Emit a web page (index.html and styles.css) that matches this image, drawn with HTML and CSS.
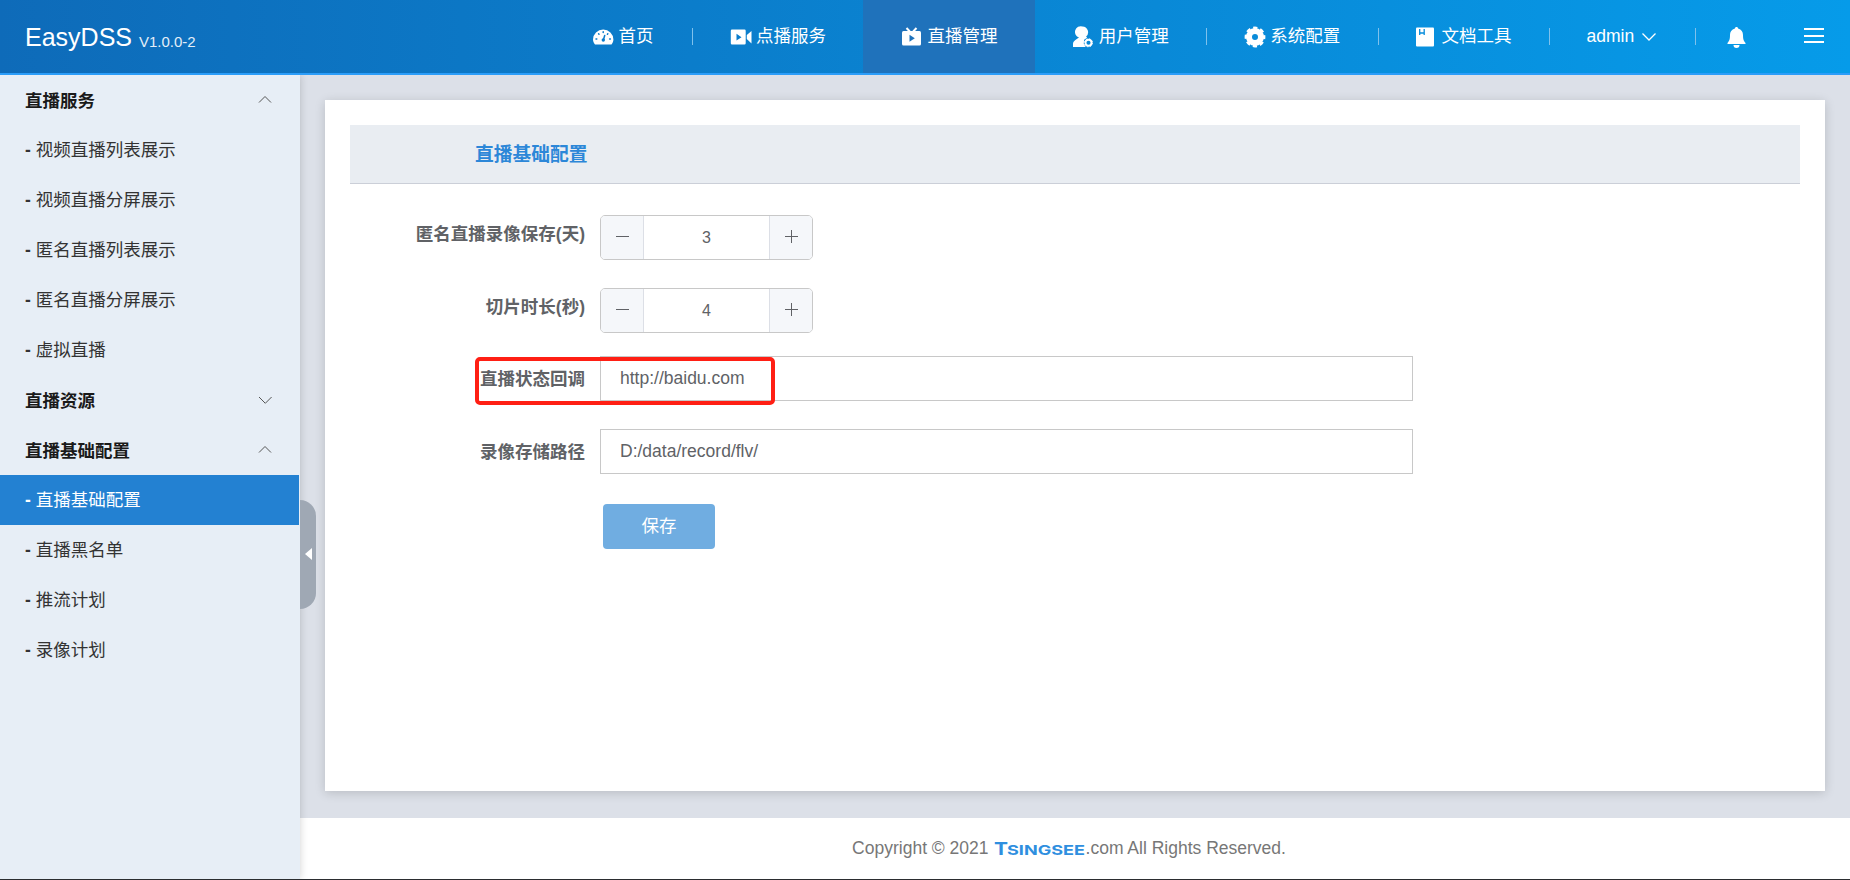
FILE: index.html
```html
<!DOCTYPE html>
<html lang="zh-CN">
<head>
    <meta charset="UTF-8">
    <meta name="viewport" content="width=device-width, initial-scale=1.0">
    <title>EasyDSS</title>
    <link rel="stylesheet" href="styles.css">
</head>
<body>
    <header class="header">
        <a class="logo">EasyDSS <small>V1.0.0-2</small></a>
        <nav class="nav">
            <a class="nav-item">
                <svg class="icon" viewBox="0 0 22 22"><path fill="#fff" d="M3 18.5C1.700 17 1 15.200 1 13.500a10.200 10 0 0 1 20.400 0c0 1.700-.6 3.500-1.900 5z"/><path stroke="#0a7ccc" stroke-width="1.500" stroke-linecap="round" d="M11.200 5.800v.6M6.600 7.800l.4.400M15.800 7.800l-.4.400M4 13h.8M17.600 13h.8M11.500 13.500l1.200-4"/><circle cx="11.300" cy="14" r="1.700" fill="#0a7ccc"/></svg>
                <span>首页</span>
            </a>
            <a class="nav-item line">
                <svg class="icon" viewBox="0 0 22 22"><path fill="#fff" d="M2 3.500h12.500q1.200 0 1.200 1.200v12.600q0 1.200-1.200 1.200H2q-1.200 0-1.200-1.200V4.700Q.8 3.500 2 3.500zM16.800 9L21.500 5v12.500l-4.700-4.500z"/><path fill="#0a7ccc" d="M6.500 7.800v6.800l5-3.400z"/></svg>
                <span>点播服务</span>
            </a>
            <a class="nav-item active">
                <svg class="icon" viewBox="0 0 22 22"><path fill="none" stroke="#fff" stroke-width="2" d="M5.500 2L8.800 5.500M15.500 2L12.200 5.500"/><path fill="#fff" d="M2.500 5h16q1.500 0 1.500 1.500v11.500q0 1.500-1.500 1.500h-16Q1 19.500 1 18V6.500Q1 5 2.500 5z"/><path fill="#1f72bb" d="M8.500 8.800v7l5.300-3.500z"/></svg>
                <span>直播管理</span>
            </a>
            <a class="nav-item">
                <svg class="icon" viewBox="0 0 22 22"><path fill="#fff" d="M10.500.5a5.700 5.700 0 0 1 3.600 10l1 1.300-3 1.900-.3 4 1.900 3.300H1v-3c0-3 3-4.500 6-6.500A5.700 5.700 0 0 1 10.500.5z"/><circle cx="16.500" cy="16.800" r="3" fill="none" stroke="#fff" stroke-width="1.900"/><circle cx="16.500" cy="16.800" r="4" fill="none" stroke="#fff" stroke-width="1" stroke-dasharray="1.600 1.540"/></svg>
                <span>用户管理</span>
            </a>
            <a class="nav-item line">
                <svg class="icon" viewBox="0 0 22 22"><circle cx="11" cy="11" r="6" fill="none" stroke="#fff" stroke-width="6"/><circle cx="11" cy="11" r="9.200" fill="none" stroke="#fff" stroke-width="2.400" stroke-dasharray="4.200 3.025" stroke-dashoffset="2.100"/></svg>
                <span>系统配置</span>
            </a>
            <a class="nav-item line">
                <svg class="icon" viewBox="0 0 22 22"><rect x="1" y="1.500" width="18" height="19" rx="1" fill="#fff"/><path fill="none" stroke="#068cdc" stroke-width="1.300" d="M4.700 3v6M4.700 7h4.500M9.200 3v6"/></svg>
                <span>文档工具</span>
            </a>
            <a class="nav-item line user">
                <span>admin</span>
                <svg class="arrow" viewBox="0 0 16 16"><path fill="none" stroke="#fff" stroke-width="1.300" d="M1.500 4.500L8 11l6.500-6.500"/></svg>
            </a>
            <a class="nav-item line bell">
                <svg class="icon" viewBox="0 0 22 22"><path fill="#fff" d="M11.500 1c1 0 1.500.6 1.600 1.500 3.400.8 4.900 3.400 4.900 6.500 0 4.500.8 6.200 2.500 8v1h-18v-1c1.700-1.800 2.500-3.500 2.500-8 0-3.100 1.500-5.700 4.900-6.500C10 1.600 10.500 1 11.500 1zM8.500 19h6a3 3 0 0 1-6 0z"/></svg>
            </a>
            <a class="menu"><i></i><i></i><i></i></a>
        </nav>
    </header>

    <div class="container">
        <aside class="sidebar">
            <div class="menu-title">直播服务<svg class="arrow" viewBox="0 0 16 16"><path d="M2 10.500L8 4.500l6 6"/></svg></div>
            <a class="menu-item">视频直播列表展示</a>
            <a class="menu-item">视频直播分屏展示</a>
            <a class="menu-item">匿名直播列表展示</a>
            <a class="menu-item">匿名直播分屏展示</a>
            <a class="menu-item">虚拟直播</a>
            <div class="menu-title">直播资源<svg class="arrow" viewBox="0 0 16 16"><path d="M2 5l6.300 6.300L14.600 5"/></svg></div>
            <div class="menu-title">直播基础配置<svg class="arrow" viewBox="0 0 16 16"><path d="M2 10.500L8 4.500l6 6"/></svg></div>
            <a class="menu-item active">直播基础配置</a>
            <a class="menu-item">直播黑名单</a>
            <a class="menu-item">推流计划</a>
            <a class="menu-item">录像计划</a>
            <div class="toggle"></div>
        </aside>

        <div class="main">
            <div class="content">
                <section class="card">
                    <h4 class="card-title">直播基础配置</h4>
                    <form class="form">
                        <div class="form-row">
                            <label>匿名直播录像保存(天)</label>
                            <div class="number">
                                <span class="number-btn"></span>
                                <span class="number-value">3</span>
                                <span class="number-btn plus"></span>
                            </div>
                        </div>
                        <div class="form-row">
                            <label>切片时长(秒)</label>
                            <div class="number">
                                <span class="number-btn"></span>
                                <span class="number-value">4</span>
                                <span class="number-btn plus"></span>
                            </div>
                        </div>
                        <div class="form-row">
                            <label>直播状态回调</label>
                            <input type="text" value="http://baidu.com">
                            <div class="mark"></div>
                        </div>
                        <div class="form-row">
                            <label>录像存储路径</label>
                            <input type="text" value="D:/data/record/flv/">
                        </div>
                        <button type="button" class="save">保存</button>
                    </form>
                </section>
            </div>
            <footer class="footer">
                <span>Copyright © 2021</span>
                <svg class="brand" viewBox="0 0 92 22"><text x="0" y="17" font-size="18" textLength="14" lengthAdjust="spacingAndGlyphs">T</text><text x="13" y="17" font-size="13.500" textLength="78" lengthAdjust="spacingAndGlyphs">SINGSEE</text></svg>
                <span>.com All Rights Reserved.</span>
            </footer>
        </div>
    </div>
</body>
</html>
```

FILE: styles.css
```css
* {
    box-sizing: border-box;
}

body {
    margin: 0;
    height: 880px;
    display: flex;
    flex-direction: column;
    overflow: hidden;
    font-family: "Liberation Sans", "Noto Sans CJK SC", sans-serif;
    font-size: 17.5px;
    color: #333;
    border-bottom: 1px solid #2b2d30;
}

/* header */
.header {
    height: 75px;
    flex: none;
    display: flex;
    justify-content: space-between;
    padding-left: 25px;
    background: linear-gradient(90deg, #0e6bb9, #069be9);
    border-bottom: 2px solid #2b9df9;
    color: #fff;
}
.logo {
    font-size: 25px;
    line-height: 75px;
}
.logo small {
    font-size: 15px;
    color: #e3eef8;
    position: relative;
    top: 1px;
}
.nav {
    display: flex;
    height: 73px;
}
.nav-item {
    position: relative;
    display: flex;
    align-items: center;
    width: 171.4px;
    padding-left: 37.5px;
    line-height: 75px;
}
.nav-item:first-child {
    width: 138px;
    padding-left: 38px;
}
.nav-item.active {
    background: #1f72bb;
}
.nav-item.line::before {
    content: "";
    position: absolute;
    left: 0;
    top: 28px;
    width: 1px;
    height: 17px;
    background: #7fc1ec;
}
.nav-item .icon {
    width: 22px;
    height: 22px;
    margin-right: 4.5px;
}
.nav-item.user {
    width: 146px;
}
.nav-item.bell {
    width: 72px;
    padding-left: 30px;
}
.arrow {
    width: 16px;
    height: 16px;
}
.user .arrow {
    margin-left: 7px;
}
.menu {
    width: 83px;
    padding: 28px 0 0 37px;
}
.menu i {
    display: block;
    width: 20px;
    height: 2px;
    margin-bottom: 4.5px;
    background: #fff;
}

/* sidebar */
.container {
    flex: 1;
    display: flex;
    min-height: 0;
}
.sidebar {
    position: relative;
    z-index: 1;
    width: 300px;
    flex: none;
    background: #e7eef6;
    box-shadow: 0 0 8px rgba(0, 0, 0, 0.18);
    clip-path: inset(0 -20px 0 0);
}
.menu-title,
.menu-item {
    display: block;
    height: 50px;
    line-height: 50px;
    padding-left: 25px;
}
.menu-title {
    display: flex;
    justify-content: space-between;
    padding-right: 27px;
    font-weight: bold;
    line-height: 52px;
    color: #1a1a1a;
}
.menu-title .arrow {
    margin-top: 17px;
}
.menu-title .arrow path {
    fill: none;
    stroke: #555;
    stroke-width: 1;
}
.menu-item::before {
    content: "- ";
    font-weight: bold;
}
.menu-item.active {
    margin-right: 1px;
    background: #2381d2;
    color: #fff;
}
.toggle {
    position: absolute;
    left: 300px;
    top: 425px;
    width: 16px;
    height: 109px;
    background: #9fa8b4;
    border-radius: 0 16px 16px 0;
}
.toggle::before {
    content: "";
    position: absolute;
    left: 5px;
    top: 48px;
    border: 6px solid transparent;
    border-right: 7px solid #fff;
    border-left: 0;
}

/* content */
.main {
    flex: 1;
    display: flex;
    flex-direction: column;
}
.content {
    flex: 1;
    padding: 25px 25px 27px;
    background: #dce0e8;
}
.card {
    height: 100%;
    padding: 25px;
    background: #fff;
    box-shadow: 0 2px 10px rgba(0, 0, 0, 0.16);
}
.card-title {
    height: 59px;
    margin: 0 0 27.25px;
    padding-left: 125px;
    line-height: 60px;
    font-size: 18.75px;
    color: #2c87d8;
    background: #e9edf2;
    border-bottom: 1px solid #cbcfd8;
}
.form-row {
    position: relative;
    display: flex;
    height: 45px;
    margin-bottom: 27.5px;
}
.form-row label {
    width: 235px;
    margin-right: 15px;
    text-align: right;
    font-weight: bold;
    line-height: 46px;
    color: #606266;
}
.form-row input {
    width: 813px;
    height: 45px;
    padding: 0 19px;
    border: 1px solid #c8c8c8;
    font: inherit;
    color: #606266;
}
.number {
    display: flex;
    width: 213px;
    height: 45px;
    margin-top: 4px;
    border: 1px solid #c8c8c8;
    border-radius: 5px;
    overflow: hidden;
}
.number-btn {
    position: relative;
    width: 43px;
    background: #f5f7fa;
    border-right: 1px solid #dcdfe6;
}
.number-btn.plus {
    border-right: 0;
    border-left: 1px solid #dcdfe6;
}
.number-btn::before,
.number-btn.plus::after {
    content: "";
    position: absolute;
    left: 15px;
    top: 20px;
    width: 13px;
    height: 1px;
    background: #606266;
}
.number-btn.plus::after {
    transform: rotate(90deg);
}
.number-value {
    flex: 1;
    text-align: center;
    line-height: 43px;
    font-size: 16px;
    color: #606266;
}
/* red frame round the callback field */
.mark {
    position: absolute;
    left: 125px;
    top: 1px;
    width: 300px;
    height: 48px;
    border: 4px solid #ff1f14;
    border-radius: 5px;
}
.save {
    display: block;
    width: 112px;
    height: 45px;
    margin: 30px 0 0 253px;
    padding: 0 0 3px;
    border: 0;
    border-radius: 4px;
    background: #70ade1;
    color: #fff;
    font: inherit;
}

/* footer */
.footer {
    height: 61px;
    flex: none;
    display: flex;
    justify-content: center;
    align-items: center;
    padding-right: 12px;
    background: #fff;
    color: #777;
}
.brand {
    width: 92px;
    height: 22px;
    margin: 0 0 0 5px;
    overflow: visible;
    fill: #2f8fdf;
    font-family: Inter, sans-serif;
    font-weight: 700;
}
```
